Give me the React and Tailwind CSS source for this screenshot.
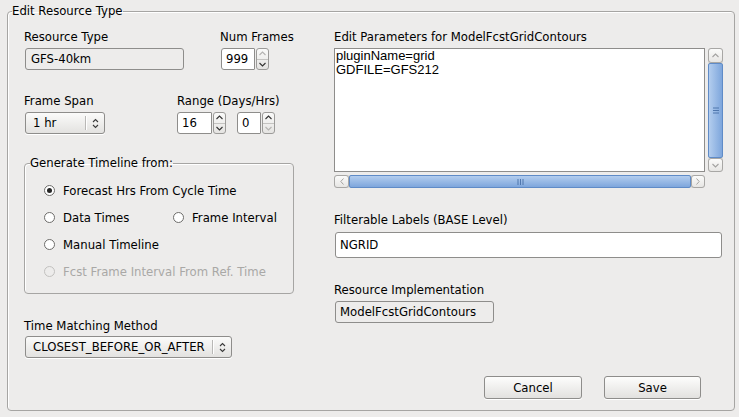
import React from "react";

const Chevron = ({ dir = "up", className = "" }) => (
  <svg width="7" height="5" viewBox="0 0 7 5" className={className}>
    <path
      d={dir === "up" ? "M0.5 4 L3.5 1 L6.5 4" : "M0.5 1 L3.5 4 L6.5 1"}
      fill="none"
      stroke="currentColor"
      strokeWidth="1.1"
    />
  </svg>
);

const ComboArrows = () => (
  <svg width="7" height="11" viewBox="0 0 7 11" className="text-[#3a3a3a]">
    <path d="M1 4 L3.5 1.5 L6 4" fill="none" stroke="currentColor" strokeWidth="1.1" />
    <path d="M1 7 L3.5 9.5 L6 7" fill="none" stroke="currentColor" strokeWidth="1.1" />
  </svg>
);

const Combo = ({ value, width }) => (
  <div
    className={`${width} ml-[1px] h-[22px] flex items-center rounded-[3px] border border-[#8e8d8b] bg-linear-to-b from-[#fbfbfa] to-[#e3e2e0] shadow-[0_1px_0_#ffffff]`}
  >
    <span className="flex-1 pl-[7px] whitespace-nowrap">{value}</span>
    <span className="h-[14px] w-px bg-[#b9b8b6] shadow-[1px_0_0_#ffffff]" />
    <span className="w-[18px] flex justify-center">
      <ComboArrows />
    </span>
  </div>
);

const Spinner = ({ value, width, upDisabled, downDisabled }) => (
  <div className="flex h-[22px]">
    <div
      className={`${width} h-full flex items-center rounded-l-[3px] rounded-r-[1px] border border-[#8e8d8b] bg-white pl-[4px]`}
    >
      {value}
    </div>
    <div className="ml-px w-[13px] h-full flex flex-col rounded-[3px] border border-[#9c9b99] bg-linear-to-b from-[#fafaf9] to-[#e5e4e2]">
      <span
        className={`flex-1 flex items-center justify-center border-b border-[#c4c3c1] ${
          upDisabled ? "text-[#b4b3b1]" : "text-[#333333]"
        }`}
      >
        <Chevron dir="up" />
      </span>
      <span
        className={`flex-1 flex items-center justify-center ${
          downDisabled ? "text-[#b4b3b1]" : "text-[#333333]"
        }`}
      >
        <Chevron dir="down" />
      </span>
    </div>
  </div>
);

const Radio = ({ label, checked, disabled }) => (
  <label className={`flex items-center gap-[8px] ${disabled ? "text-[#a9a8a6]" : "text-black"}`}>
    <span
      className={`w-[11px] h-[11px] rounded-full border flex items-center justify-center ${
        disabled ? "border-[#c2c1bf] bg-[#edeceb]" : "border-[#6e6d6b] bg-white"
      }`}
    >
      {checked && <span className="w-[5px] h-[5px] rounded-full bg-[#262626]" />}
    </span>
    <span className="whitespace-nowrap">{label}</span>
  </label>
);

const Button = ({ children, width }) => (
  <button
    className={`${width} h-[23px] rounded-[3px] border border-[#8e8d8b] bg-linear-to-b from-[#fdfdfc] to-[#e2e1df] text-black shadow-[0_1px_0_#ffffff]`}
  >
    {children}
  </button>
);

const ScrollBtn = ({ dir, className = "" }) => (
  <span
    className={`flex items-center justify-center rounded-[3px] border border-[#a8a7a5] bg-linear-to-b from-[#fbfbfa] to-[#e7e6e4] text-[#a3a2a0] ${className}`}
  >
    {dir === "left" || dir === "right" ? (
      <svg width="4" height="7" viewBox="0 0 4 7">
        <path
          d={dir === "left" ? "M3.5 0.5 L0.8 3.5 L3.5 6.5" : "M0.5 0.5 L3.2 3.5 L0.5 6.5"}
          fill="none"
          stroke="currentColor"
          strokeWidth="1"
        />
      </svg>
    ) : (
      <Chevron dir={dir} />
    )}
  </span>
);

export default function App() {
  return (
    <div className="w-[739px] h-[417px] overflow-hidden bg-[#edeceb] pt-[4px] pl-[7px] font-['DejaVu_Sans',sans-serif] text-[11.7px] leading-[14px] text-black whitespace-nowrap">
      <fieldset className="m-0 p-0 w-[728px] h-[407px] rounded-[4px] border border-[#a6a5a3] shadow-[inset_1px_1px_0_#ffffff]">
        <legend className="ml-[4px] p-0 leading-[14px]">Edit Resource Type</legend>

        <div className="flex pl-[16px]">
          {/* left column */}
          <div className="w-[270px] flex flex-col">
            <div className="flex pt-[12px]">
              <div className="w-[196px] shrink-0">
                <div>Resource Type</div>
                <div className="mt-[4px] ml-[1px] w-[159px] h-[22px] flex items-center rounded-[3px] border border-[#8e8d8b] bg-[#edeceb] pl-[5px]">
                  GFS-40km
                </div>
              </div>
              <div>
                <div>Num Frames</div>
                <div className="mt-[4px] ml-[1px]">
                  <Spinner value="999" width="w-[34px]" upDisabled />
                </div>
              </div>
            </div>

            <div className="flex mt-[24px]">
              <div className="w-[153px] shrink-0">
                <div>Frame Span</div>
                <div className="mt-[4px]">
                  <Combo value="1 hr" width="w-[80px]" />
                </div>
              </div>
              <div>
                <div>Range (Days/Hrs)</div>
                <div className="mt-[4px] flex gap-[11px]">
                  <Spinner value="16" width="w-[35px]" />
                  <Spinner value="0" width="w-[24px]" downDisabled />
                </div>
              </div>
            </div>

            <fieldset className="mt-[22px] m-0 p-0 w-[270px] h-[138px] rounded-[4px] border border-[#a6a5a3] shadow-[inset_1px_1px_0_#ffffff]">
              <legend className="ml-[5px] p-0 leading-[14px]">Generate Timeline from:</legend>
              <div className="pl-[19px] mt-[7px] flex flex-col">
                <div className="h-[27px] flex items-center">
                  <Radio label="Forecast Hrs From Cycle Time" checked />
                </div>
                <div className="h-[27px] flex items-center">
                  <div className="w-[129px]">
                    <Radio label="Data Times" />
                  </div>
                  <Radio label="Frame Interval" />
                </div>
                <div className="h-[27px] flex items-center">
                  <Radio label="Manual Timeline" />
                </div>
                <div className="h-[27px] flex items-center">
                  <Radio label="Fcst Frame Interval From Ref. Time" disabled />
                </div>
              </div>
            </fieldset>

            <div className="mt-[25px]">Time Matching Method</div>
            <div className="mt-[3px]">
              <Combo value="CLOSEST_BEFORE_OR_AFTER" width="w-[207px]" />
            </div>
          </div>

          {/* right column */}
          <div className="ml-[40px] w-[389px] flex flex-col pt-[12px]">
            <div>Edit Parameters for ModelFcstGridContours</div>
            <div className="mt-[4px] flex h-[124px]">
              <div className="w-[371px] h-full border border-[#8e8d8b] bg-white pl-[1px] font-['Liberation_Sans',Arial,sans-serif] text-[13px] leading-[14px]">
                <div>pluginName=grid</div>
                <div>GDFILE=GFS212</div>
              </div>
              <div className="ml-[3px] w-[15px] h-full flex flex-col rounded-[3px] bg-[#dcdbd9]">
                <ScrollBtn dir="up" className="h-[15px]" />
                <div className="flex-1 flex items-center justify-center rounded-[2px] border border-[#5f8bc7] bg-linear-to-r from-[#b3cdee] to-[#7ea6dc]">
                  <svg width="6" height="7" viewBox="0 0 6 7">
                    <path d="M0 1h6M0 3.5h6M0 6h6" stroke="#4f76ad" strokeWidth="1" />
                  </svg>
                </div>
                <ScrollBtn dir="down" className="h-[14px]" />
              </div>
            </div>
            <div className="mt-[3px] w-[371px] h-[13px] flex rounded-[3px] bg-[#dcdbd9]">
              <ScrollBtn dir="left" className="w-[15px] h-full" />
              <div className="flex-1 flex items-center justify-center rounded-[2px] border border-[#5f8bc7] bg-linear-to-b from-[#b3cdee] to-[#7ea6dc]">
                <svg width="7" height="6" viewBox="0 0 7 6">
                  <path d="M1 0v6M3.5 0v6M6 0v6" stroke="#4f76ad" strokeWidth="1" />
                </svg>
              </div>
              <ScrollBtn dir="right" className="w-[14px] h-full" />
            </div>

            <div className="mt-[25px]">Filterable Labels (BASE Level)</div>
            <div className="mt-[5px] ml-[1px] w-[387px] h-[26px] flex items-center rounded-[3px] border border-[#8e8d8b] bg-white pl-[4px]">
              NGRID
            </div>

            <div className="mt-[25px]">Resource Implementation</div>
            <div className="mt-[4px] ml-[1px] w-[159px] h-[22px] flex items-center rounded-[3px] border border-[#8e8d8b] bg-[#edeceb] pl-[4px]">
              ModelFcstGridContours
            </div>

            <div className="mt-[53px] flex justify-end gap-[22px] pr-[22px]">
              <Button width="w-[98px]">Cancel</Button>
              <Button width="w-[97px]">Save</Button>
            </div>
          </div>
        </div>
      </fieldset>
    </div>
  );
}
